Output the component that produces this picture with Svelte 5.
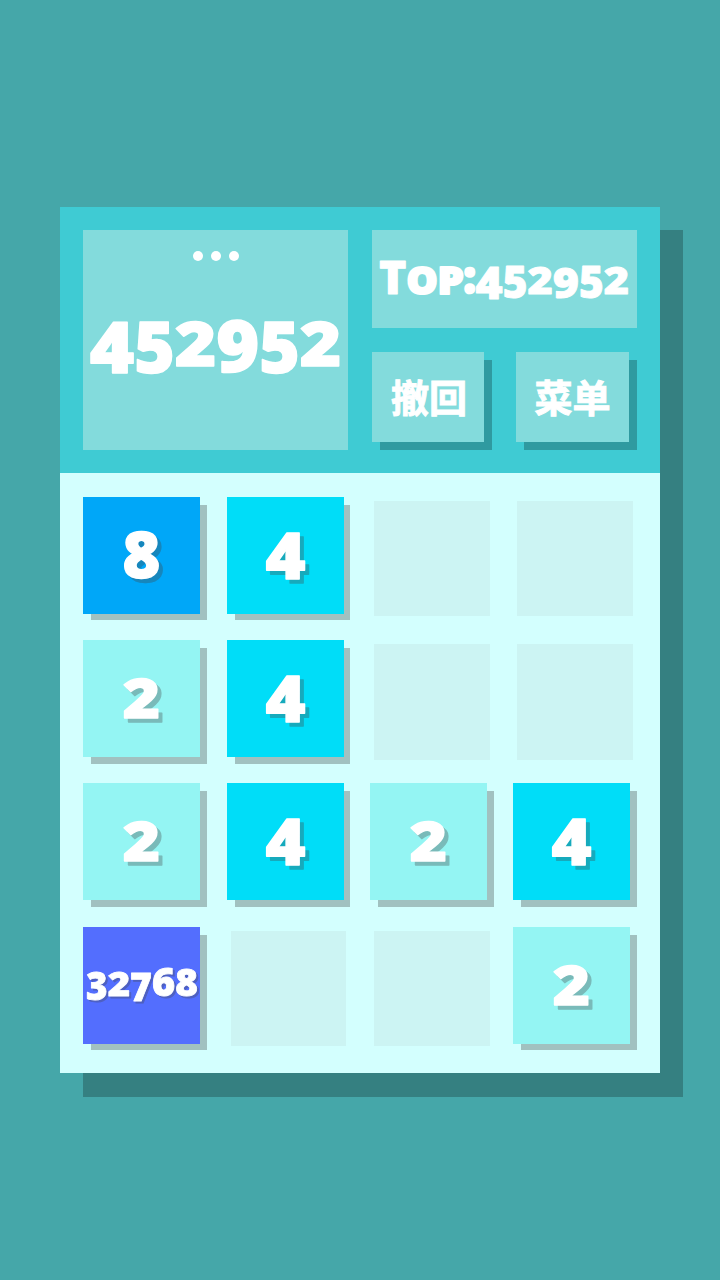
<script>
  let score = 452952;
  let top = 452952;

  let board = [
    [8, 4, 0, 0],
    [2, 4, 0, 0],
    [2, 4, 2, 4],
    [32768, 0, 0, 2],
  ];

  // Old-style glyph metrics, in score-sized pixels:
  // w = advance, size = font size, drop = distance under the baseline
  const metrics = {
    2: { w: 41.5, size: 61.5, drop: -0.3 },
    3: { w: 40, size: 71, drop: 6.5 },
    4: { w: 44.5, size: 71.5, drop: 7.3 },
    5: { w: 40.5, size: 71.5, drop: 6.7 },
    6: { w: 43, size: 70.5, drop: -0.3 },
    7: { w: 40.5, size: 73, drop: 8 },
    8: { w: 42, size: 70, drop: -0.5 },
    9: { w: 43, size: 70.5, drop: 6.3 },
    T: { w: 45, size: 76, drop: -0.5 },
    O: { w: 51, size: 61.5, drop: -0.3, heavy: 3.5 },
    P: { w: 43, size: 62, drop: -0.5, heavy: 3.5 },
    ':': { w: 19.5, size: 71, drop: -1.5, heavy: 4.5 },
  };

  function layout(text, scale) {
    let x = 0;
    const glyphs = [...String(text)].map((ch) => {
      const m = metrics[ch];
      const g = {
        ch,
        x,
        y: m.drop * scale,
        w: m.w * scale,
        size: m.size * scale,
        stroke: (m.heavy ?? 1.5) * scale,
      };
      x += g.w;
      return g;
    });
    return { glyphs, width: x };
  }
</script>

{#snippet lettering(text, scale, cx, y, shadow)}
  {@const run = layout(text, scale)}
  <svg class="lettering" class:shadowed={shadow > 0} style="--drop: {shadow}px">
    <g transform="translate({cx - run.width / 2} {y})">
      <text>{#each run.glyphs as g}<tspan x={g.x} y={g.y} font-size={g.size} stroke-width={g.stroke} textLength={g.w} lengthAdjust="spacingAndGlyphs">{g.ch}</tspan>{/each}</text>
    </g>
  </svg>
{/snippet}

<main>
  <div class="game">
    <header>
      <div class="score">
        <div class="dots"><i></i><i></i><i></i></div>
        {@render lettering(score, 1, 132.5, 136, 0)}
      </div>
      <div class="side">
        <div class="top">{@render lettering('TOP:' + top, 0.61, 132, 64.3, 0)}</div>
        <div class="buttons">
          <button>撤回</button>
          <button>菜单</button>
        </div>
      </div>
    </header>
    <div class="grid">
      {#each board as row}
        {#each row as value}
          {#if value}
            <div class="cell filled">
              <div class="tile v{value}">
                {#if value > 9999}
                  {@render lettering(value, 0.54, 59, 69.3, 2)}
                {:else}
                  {@render lettering(value, 0.9, 58.5, value === 8 ? 81 : value === 4 ? 75.3 : 78, 4)}
                {/if}
              </div>
            </div>
          {:else}
            <div class="cell empty"></div>
          {/if}
        {/each}
      {/each}
    </div>
  </div>
</main>

<style>
  :global(body) {
    background: #45a7a9;
  }

  main {
    height: 1280px;
    display: flex;
    align-items: center;
    justify-content: center;
  }

  .game {
    width: 600px;
    height: 866px;
    background: #d3fffe;
    box-shadow: 23px 23px 0 #358081, 23px 24px 0 #358081;
  }

  header {
    height: 266px;
    box-sizing: border-box;
    padding: 23px;
    display: flex;
    gap: 24px;
    background: #3fcbd3;
  }

  .score {
    position: relative;
    width: 265px;
    height: 220px;
    background: #83dbdc;
  }

  .dots {
    display: flex;
    justify-content: center;
    gap: 8px;
    padding-top: 21px;
  }

  .dots i {
    width: 10px;
    height: 10px;
    border-radius: 50%;
    background: #fff;
  }

  .side {
    width: 265px;
    display: flex;
    flex-direction: column;
    gap: 24px;
  }

  .top {
    position: relative;
    height: 98px;
    background: #83dbdc;
  }

  .buttons {
    display: flex;
    gap: 32px;
  }

  button {
    width: 112px;
    height: 90px;
    border: 0;
    padding: 0 0 3px;
    background: #83dbdc;
    box-shadow: 8px 8px 0 #2f9aa0;
    color: #fff;
    font: 700 38px 'Noto Sans CJK SC', sans-serif;
    -webkit-text-stroke: 1px #fff;
  }

  button:first-child {
    padding-left: 2px;
  }

  button:last-child {
    width: 113px;
  }

  .grid {
    display: grid;
    grid-template-columns: repeat(4, 123.67px);
    grid-auto-rows: 123.67px;
    gap: 19.66px;
    padding: 23.6px 23.3px;
  }

  .filled {
    background: linear-gradient(#a1c1c0, #a1c1c0) 8px 8px no-repeat;
  }

  .tile {
    position: relative;
    width: 117px;
    height: 117px;
  }

  .empty {
    margin: 4px;
    background: #ccf4f3;
  }

  .v2 { background: #94f5f3; }
  .v4 { background: #00ddf8; }
  .v8 { background: #00a7f8; }
  .v32768 { background: #536efe; }

  .lettering {
    position: absolute;
    inset: 0;
    width: 100%;
    height: 100%;
    overflow: visible;
    font-family: 'Open Sans', sans-serif;
    font-weight: 800;
    fill: #fff;
    stroke: #fff;
    stroke-linejoin: round;
  }

  .shadowed {
    filter: drop-shadow(var(--drop) var(--drop) 0 rgba(68, 68, 68, 0.33));
  }
</style>
